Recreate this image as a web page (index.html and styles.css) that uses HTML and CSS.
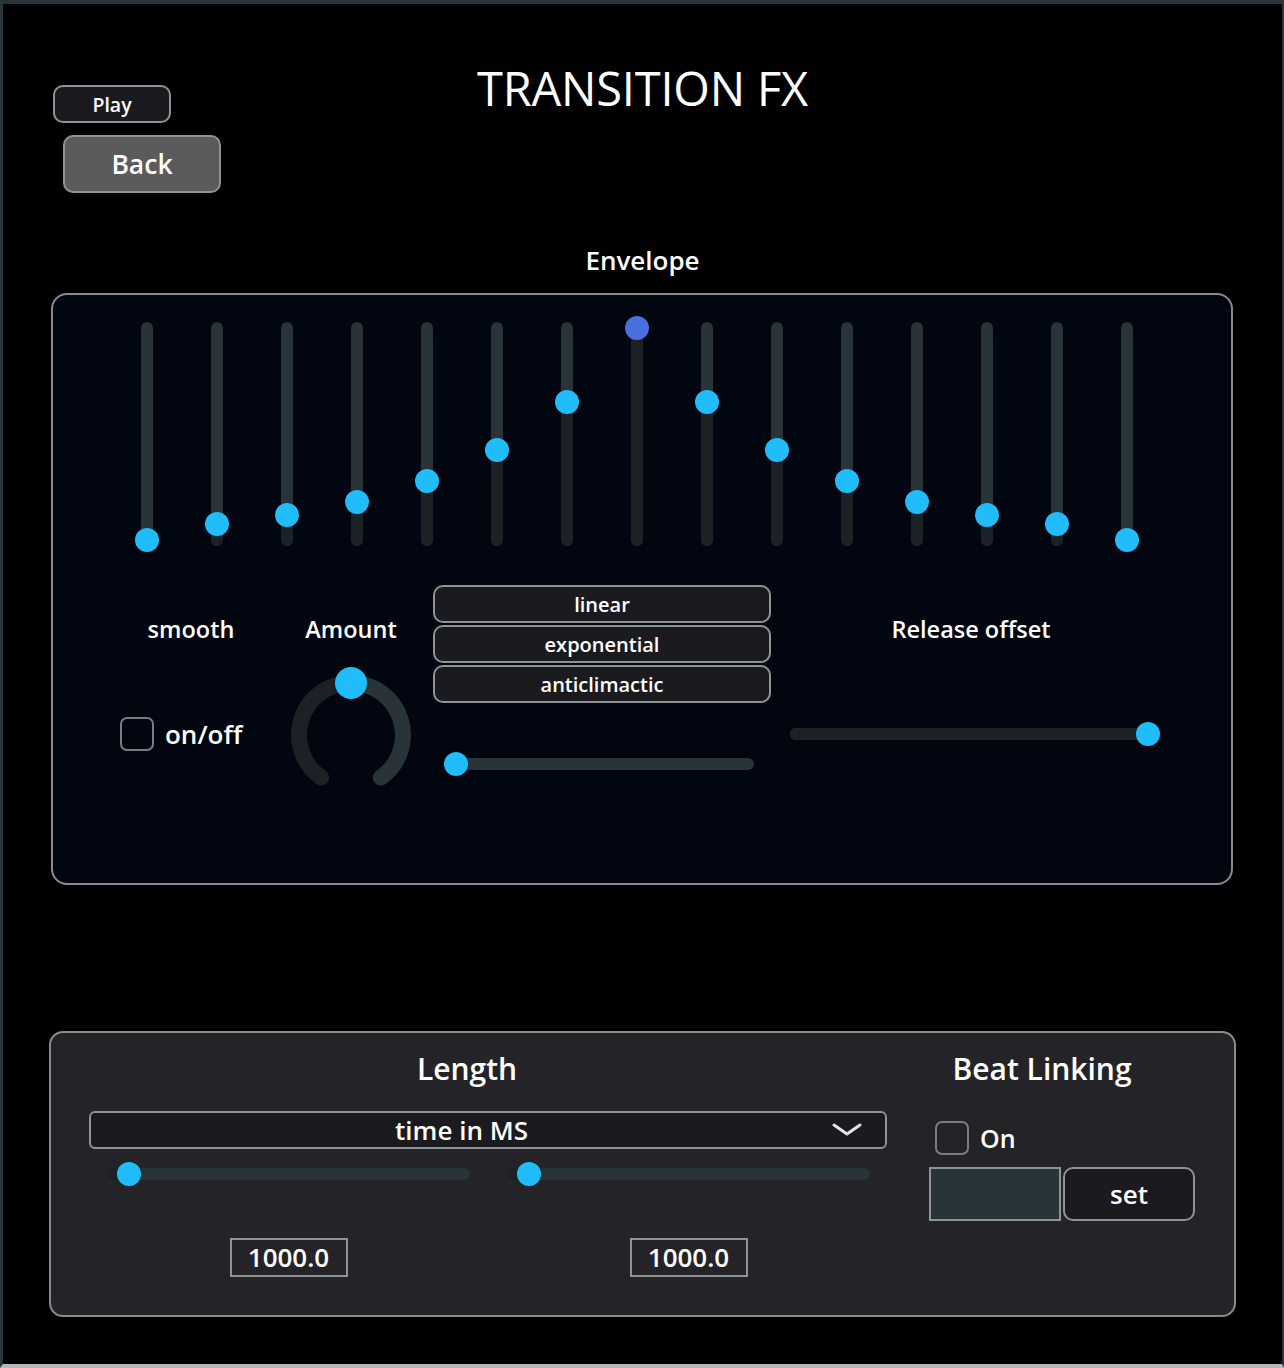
FILE: index.html
```html
<!DOCTYPE html>
<html lang="en">
<head>
<meta charset="utf-8">
<title>Transition FX</title>
<link rel="stylesheet" href="styles.css">
</head>
<body>
<div class="frame">
  <header class="top">
    <div class="top-left">
      <button class="btn btn-play">Play</button>
      <button class="btn btn-back">Back</button>
    </div>
    <h1 class="title">TRANSITION FX</h1>
    <div class="top-right"></div>
  </header>

  <div class="section-label">Envelope</div>

  <section class="env">
    <div class="vsliders">
      <div class="vs"><div class="vs-track"><div class="vs-fill" style="height:6px"></div><div class="vs-thumb" style="top:206px"></div></div></div>
      <div class="vs"><div class="vs-track"><div class="vs-fill" style="height:22px"></div><div class="vs-thumb" style="top:190px"></div></div></div>
      <div class="vs"><div class="vs-track"><div class="vs-fill" style="height:31px"></div><div class="vs-thumb" style="top:181px"></div></div></div>
      <div class="vs"><div class="vs-track"><div class="vs-fill" style="height:44px"></div><div class="vs-thumb" style="top:168px"></div></div></div>
      <div class="vs"><div class="vs-track"><div class="vs-fill" style="height:65px"></div><div class="vs-thumb" style="top:147px"></div></div></div>
      <div class="vs"><div class="vs-track"><div class="vs-fill" style="height:96px"></div><div class="vs-thumb" style="top:116px"></div></div></div>
      <div class="vs"><div class="vs-track"><div class="vs-fill" style="height:144px"></div><div class="vs-thumb" style="top:68px"></div></div></div>
      <div class="vs"><div class="vs-track"><div class="vs-fill" style="height:218px"></div><div class="vs-thumb vs-thumb-active" style="top:-6px"></div></div></div>
      <div class="vs"><div class="vs-track"><div class="vs-fill" style="height:144px"></div><div class="vs-thumb" style="top:68px"></div></div></div>
      <div class="vs"><div class="vs-track"><div class="vs-fill" style="height:96px"></div><div class="vs-thumb" style="top:116px"></div></div></div>
      <div class="vs"><div class="vs-track"><div class="vs-fill" style="height:65px"></div><div class="vs-thumb" style="top:147px"></div></div></div>
      <div class="vs"><div class="vs-track"><div class="vs-fill" style="height:44px"></div><div class="vs-thumb" style="top:168px"></div></div></div>
      <div class="vs"><div class="vs-track"><div class="vs-fill" style="height:31px"></div><div class="vs-thumb" style="top:181px"></div></div></div>
      <div class="vs"><div class="vs-track"><div class="vs-fill" style="height:22px"></div><div class="vs-thumb" style="top:190px"></div></div></div>
      <div class="vs"><div class="vs-track"><div class="vs-fill" style="height:6px"></div><div class="vs-thumb" style="top:206px"></div></div></div>
    </div>

    <div class="env-row">
      <div class="col col-smooth">
        <div class="ctl-label">smooth</div>
        <label class="check-row check-row-smooth">
          <span class="checkbox"></span>
          <span class="check-text">on/off</span>
        </label>
      </div>

      <div class="col col-amount">
        <div class="ctl-label">Amount</div>
        <svg class="knob" width="140" height="130" viewBox="0 0 140 130">
          <path d="M 40.2 117.6 A 52 52 0 0 1 70 23" fill="none" stroke="#1b2125" stroke-width="16" stroke-linecap="round"/>
          <path d="M 70 23 A 52 52 0 0 1 99.8 117.6" fill="none" stroke="#29333a" stroke-width="16" stroke-linecap="round"/>
          <circle cx="70" cy="23" r="16" fill="#21bdfa"/>
        </svg>
      </div>

      <div class="col col-curve">
        <div class="curve-buttons">
          <button class="btn btn-curve">linear</button>
          <button class="btn btn-curve">exponential</button>
          <button class="btn btn-curve">anticlimactic</button>
        </div>
        <div class="hs-wrap hs-wrap-curve">
          <div class="hs-track hs-track-curve">
            <div class="hs-fill" style="width:12px"></div>
            <div class="hs-thumb" style="left:0px"></div>
          </div>
        </div>
      </div>

      <div class="col col-release">
        <div class="ctl-label ctl-label-release">Release offset</div>
        <div class="hs-wrap hs-wrap-release">
          <div class="hs-track hs-track-release">
            <div class="hs-fill" style="width:358px"></div>
            <div class="hs-thumb" style="left:346px"></div>
          </div>
        </div>
      </div>
    </div>
  </section>

  <section class="len">
    <div class="len-main">
      <div class="len-label">Length</div>
      <div class="dropdown">
        <span class="dropdown-text">time in MS</span>
        <svg class="chevron" width="30" height="14" viewBox="0 0 30 14">
          <polyline points="2,2 15,11 28,2" fill="none" stroke="#e6e6e6" stroke-width="3" stroke-linecap="round" stroke-linejoin="round"/>
        </svg>
      </div>
      <div class="len-sliders">
        <div class="hs-wrap">
          <div class="hs-track hs-track-len">
            <div class="hs-fill" style="width:22px"></div>
            <div class="hs-thumb" style="left:10px"></div>
          </div>
        </div>
        <div class="hs-wrap">
          <div class="hs-track hs-track-len">
            <div class="hs-fill" style="width:22px"></div>
            <div class="hs-thumb" style="left:10px"></div>
          </div>
        </div>
      </div>
      <div class="len-numbers">
        <div class="num-cell"><div class="num-box">1000.0</div></div>
        <div class="num-cell"><div class="num-box">1000.0</div></div>
      </div>
    </div>

    <div class="beat">
      <div class="beat-label">Beat Linking</div>
      <label class="check-row check-row-beat">
        <span class="checkbox"></span>
        <span class="check-text check-text-on">On</span>
      </label>
      <div class="beat-row">
        <div class="beat-box"></div>
        <button class="btn btn-set">set</button>
      </div>
    </div>
  </section>
</div>
</body>
</html>
```

FILE: styles.css
```css
* {
  box-sizing: border-box;
}

html, body {
  margin: 0;
  padding: 0;
  background: #000;
}

body {
  font-family: "Open Sans", "DejaVu Sans", sans-serif;
  font-weight: 600;
  color: #fff;
}

.frame {
  width: 1284px;
  height: 1368px;
  background: #000;
  border-top: 4px solid #2b3439;
  border-left: 3px solid #2b3439;
  border-right: 2px solid #2b3439;
  border-bottom: 4px solid #b4b8ba;
  overflow: hidden;
}

/* ---------- header ---------- */
.top {
  display: grid;
  grid-template-columns: 1fr auto 1fr;
  align-items: start;
  padding-top: 60px;
}

.top-left {
  display: flex;
  flex-direction: column;
  align-items: flex-start;
  padding-left: 50px;
  margin-top: 21px;
}

.btn {
  font-family: "Open Sans", "DejaVu Sans", sans-serif;
  font-weight: 600;
  color: #fff;
  background: #1b1b1f;
  border: 2px solid #8e9494;
  border-radius: 10px;
  padding: 0;
  display: flex;
  align-items: center;
  justify-content: center;
  cursor: pointer;
}

.btn-play {
  width: 118px;
  height: 38px;
  font-size: 19.5px;
}

.btn-back {
  width: 158px;
  height: 58px;
  margin-top: 12px;
  margin-left: 10px;
  font-size: 26.5px;
  background: #5b5b5b;
}

.title {
  margin: 0;
  font-size: 47px;
  line-height: 48px;
  font-weight: 500;
  letter-spacing: -0.2px;
  text-align: center;
  white-space: nowrap;
}

/* ---------- envelope ---------- */
.section-label {
  margin-top: 51px;
  text-align: center;
  font-size: 26px;
  line-height: 32px;
}

.env {
  margin-top: 17px;
  margin-left: 48px;
  width: 1182px;
  height: 592px;
  border: 2px solid #8a8a8a;
  border-radius: 16px;
  background: #020610;
  padding-top: 27px;
}

.vsliders {
  display: flex;
  margin-left: 59px;
}

.vs {
  width: 70px;
  display: flex;
  justify-content: center;
}

.vs-track {
  position: relative;
  width: 12px;
  height: 224px;
  border-radius: 6px;
  background: #29333a;
}

.vs-fill {
  position: absolute;
  left: 0;
  right: 0;
  bottom: 0;
  border-radius: 0 0 6px 6px;
  background: #1b2125;
}

.vs-thumb {
  position: absolute;
  left: -6px;
  width: 24px;
  height: 24px;
  border-radius: 50%;
  background: #21bdfa;
}

.vs-thumb-active {
  background: #4a70e0;
}

.env-row {
  display: flex;
  align-items: flex-start;
  margin-top: 39px;
  margin-left: 58px;
}

.col {
  display: flex;
  flex-direction: column;
}

.ctl-label {
  margin-top: 29px;
  font-size: 23.5px;
  line-height: 30px;
  text-align: center;
  white-space: nowrap;
}

.col-smooth {
  width: 160px;
}

.check-row {
  display: flex;
  align-items: center;
  gap: 11px;
}

.check-row-smooth {
  margin-top: 73px;
  padding-left: 9px;
}

.checkbox {
  display: block;
  width: 34px;
  height: 34px;
  border: 2px solid #7c7c7c;
  border-radius: 7px;
}

.check-text {
  font-size: 26px;
  line-height: 34px;
}

.col-amount {
  width: 140px;
  margin-left: 10px;
}

.knob {
  display: block;
  margin-top: 16px;
}

.col-curve {
  width: 338px;
  margin-left: 12px;
}

.curve-buttons {
  display: flex;
  flex-direction: column;
  gap: 2px;
}

.btn-curve {
  width: 338px;
  height: 38px;
  font-size: 20px;
}

.hs-wrap {
  height: 24px;
  display: flex;
  align-items: center;
}

.hs-wrap-curve {
  margin-top: 49px;
  padding-left: 11px;
}

.hs-track {
  position: relative;
  height: 12px;
  border-radius: 6px;
  background: #29333a;
}

.hs-fill {
  position: absolute;
  left: 0;
  top: 0;
  bottom: 0;
  border-radius: 6px;
  background: #1b2125;
}

.hs-thumb {
  position: absolute;
  top: -6px;
  width: 24px;
  height: 24px;
  border-radius: 50%;
  background: #21bdfa;
}

.hs-track-curve {
  width: 310px;
}

.col-release {
  width: 370px;
  margin-left: 19px;
}

.ctl-label-release {
  width: 362px;
}

.hs-wrap-release {
  margin-top: 78px;
}

.hs-track-release {
  width: 358px;
}

/* ---------- length panel ---------- */
.len {
  margin-top: 146px;
  margin-left: 46px;
  width: 1187px;
  height: 286px;
  border: 2px solid #8a8a8a;
  border-radius: 14px;
  background: #242428;
  padding: 18px 0 0 38px;
  display: flex;
  align-items: flex-start;
}

.len-main {
  width: 798px;
  display: flex;
  flex-direction: column;
}

.len-label,
.beat-label {
  font-size: 30px;
  line-height: 36px;
  text-align: center;
  white-space: nowrap;
}

.len-label {
  padding-right: 42px;
}

.dropdown {
  margin-top: 24px;
  height: 38px;
  border: 2px solid #8e9494;
  border-radius: 6px;
  background: #1b1b1f;
  display: flex;
  align-items: center;
}

.dropdown-text {
  flex: 1;
  text-align: center;
  font-size: 26px;
  line-height: 34px;
}

.chevron {
  display: block;
  margin-right: 23px;
}

.len-sliders,
.len-numbers {
  display: flex;
  gap: 37px;
  margin-left: 18px;
}

.len-sliders {
  margin-top: 13px;
}

.hs-track-len {
  width: 363px;
}

.len-numbers {
  margin-top: 52px;
}

.num-cell {
  width: 363px;
  display: flex;
  justify-content: center;
}

.num-box {
  width: 118px;
  height: 39px;
  border: 2px solid #8e9494;
  display: flex;
  align-items: center;
  justify-content: center;
  font-size: 26px;
  line-height: 35px;
}

.beat {
  width: 266px;
  margin-left: 42px;
  display: flex;
  flex-direction: column;
}

.beat-label {
  padding-right: 40px;
}

.check-row-beat {
  margin-top: 34px;
  margin-left: 6px;
}

.check-text-on {
  font-size: 25px;
}

.beat-row {
  margin-top: 12px;
  display: flex;
  gap: 2px;
}

.beat-box {
  width: 132px;
  height: 54px;
  border: 2px solid #8e9494;
  background: #29333a;
}

.btn-set {
  width: 132px;
  height: 54px;
  font-size: 26px;
}
```
